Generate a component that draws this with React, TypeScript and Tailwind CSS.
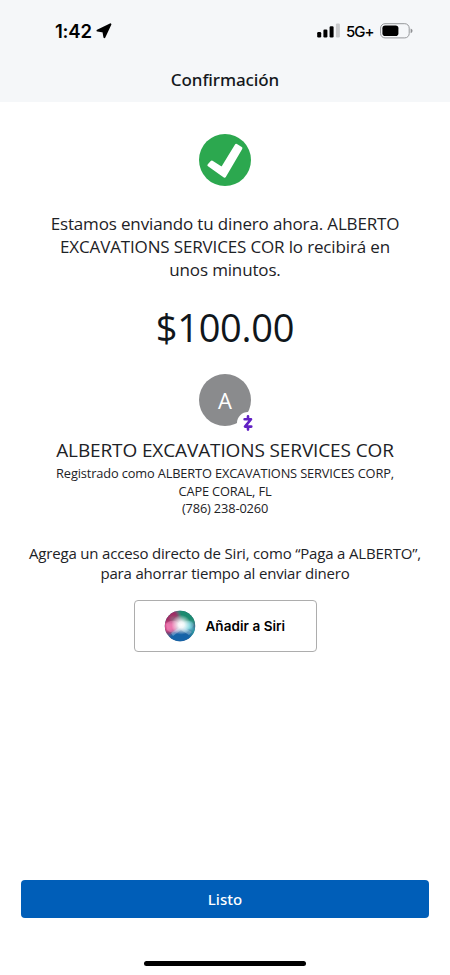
import type { ReactNode } from 'react';

const payment = {
  amount: '$100.00',
  initial: 'A',
  name: 'ALBERTO EXCAVATIONS SERVICES COR',
  phone: '(786) 238-0260',
};

function Line({ children }: { children: ReactNode }) {
  return <span className="block whitespace-nowrap">{children}</span>;
}

function StatusBar() {
  return (
    <div className="flex h-[61px] items-center justify-between pl-[55px] pr-[37px]">
      <div className="flex items-center gap-[4px]">
        <span className="pt-[1px] font-['Inter'] text-[18.5px] leading-none font-semibold tracking-[-0.2px] text-black">
          1:42
        </span>
        <svg width="16" height="16" viewBox="0 0 16 16">
          <path
            d="M14.4 1.4 8.4 14.2 7.4 8.5 1.5 7.6Z"
            fill="#000"
            stroke="#000"
            strokeWidth="2"
            strokeLinejoin="round"
          />
        </svg>
      </div>

      <div className="flex items-center">
        <svg width="24" height="15" viewBox="0 0 24 15">
          <rect x="0.2" y="9" width="4" height="5.4" rx="1.2" fill="#000" />
          <rect x="6.4" y="6.6" width="4" height="7.8" rx="1.2" fill="#000" />
          <rect x="12.6" y="3.2" width="4" height="11.2" rx="1.2" fill="#000" />
          <rect x="18.9" y="0.4" width="4" height="14" rx="1.2" fill="#c9cacc" />
        </svg>
        <span className="ml-[5px] w-[28px] pt-[2px] font-['Inter'] text-[15px] leading-none font-medium tracking-[-1px] text-black">
          5G+
        </span>
        <svg className="ml-[6px]" width="33" height="16" viewBox="0 0 33 16">
          <rect x="0.6" y="0.7" width="28.6" height="14.2" rx="4.4" fill="none" stroke="#96989b" strokeWidth="1" />
          <rect x="2.4" y="2.5" width="16" height="10.6" rx="2.8" fill="#000" />
          <path d="M30.6 5.4c1.3.4 1.9 1.3 1.9 2.4s-.6 2-1.9 2.4Z" fill="#8f9194" />
        </svg>
      </div>
    </div>
  );
}

function SiriOrb() {
  return (
    <svg width="32" height="32" viewBox="0 0 32 32">
      <defs>
        <radialGradient id="orbGlow" cx="0.54" cy="0.46" r="0.33">
          <stop offset="0" stopColor="#fff" />
          <stop offset="0.3" stopColor="#fff" stopOpacity="0.9" />
          <stop offset="1" stopColor="#fff" stopOpacity="0" />
        </radialGradient>
        <filter id="orbBlur" x="-30%" y="-30%" width="160%" height="160%">
          <feGaussianBlur stdDeviation="1.6" />
        </filter>
        <clipPath id="orbClip">
          <circle cx="16" cy="16" r="15.2" />
        </clipPath>
      </defs>
      <g clipPath="url(#orbClip)">
        <rect width="32" height="32" fill="#3e5f82" />
        <g filter="url(#orbBlur)">
          <path d="M12-4H36V14L18 13Z" fill="#1e8a70" />
          <path d="M-4 6 8-3 14 4 16 14 6 24-4 22Z" fill="#a02c64" />
          <path d="M6 7 15 7 16 14 8 13Z" fill="#93627f" />
          <path d="M0 13 12 12 13 21 2 21Z" fill="#e8609f" />
          <path d="M18 13 28 12 29 20 20 21Z" fill="#6fcbe0" />
          <path d="M36 15 28 19 26 32 36 28Z" fill="#2397a4" />
          <path d="M3 36 6 24 16 20 27 24 28 36Z" fill="#1463a8" />
        </g>
        <path d="M2 14C6 9 14 10 17 16 14 23 7 24 3 20Z" fill="#f4a4cd" opacity="0.35" />
        <path d="M17 15C21 9 28 10 30 15 28 20 22 20 17 16Z" fill="#8ce8d8" opacity="0.25" />
        <path d="M17 16 28 22 25 25 17 20 9 26 7 23Z" fill="#a5d7f5" opacity="0.4" />
        <circle cx="16" cy="16" r="15" fill="url(#orbGlow)" />
      </g>
    </svg>
  );
}

function Avatar() {
  return (
    <div className="relative mt-[23px] flex h-[52px] w-[52px] items-center justify-center rounded-full bg-[#8a8b8d]">
      <span className="text-[22px] leading-none text-white">{payment.initial}</span>
      {/* Zelle badge */}
      <div className="absolute top-[38px] left-[38px] flex h-[22px] w-[22px] items-center justify-center rounded-full bg-white">
        <svg width="10" height="16" viewBox="0 0 10 16">
          <path
            d="M1.6 4.2H8L2 11.6H8.3M5 1.3V4.2M5 11.6V14.6"
            fill="none"
            stroke="#6121c4"
            strokeWidth="2.6"
            strokeLinecap="round"
            strokeLinejoin="round"
          />
        </svg>
      </div>
    </div>
  );
}

export default function App() {
  return (
    <div className="flex h-[975px] w-[450px] flex-col bg-white font-['Open_Sans',sans-serif] text-[#1d2226]">
      <header className="h-[102px] bg-[#f5f7f9]">
        <StatusBar />
        <h1 className="pt-[7px] text-center font-['Noto_Sans',sans-serif] text-[17px] leading-[24px] font-medium tracking-[-0.1px] text-[#14181c]">
          Confirmación
        </h1>
      </header>

      <main className="flex flex-1 flex-col items-center text-center">
        <svg className="mt-[32px]" width="52" height="52" viewBox="0 0 52 52">
          <circle cx="26" cy="26" r="26" fill="#2ca84f" />
          <path
            d="M9.8 31.2 12.8 28 23 34.4 37.2 11.2 42 14.2 25.6 42.4Z"
            fill="#fff"
            stroke="#fff"
            strokeWidth="2.8"
            strokeLinejoin="round"
          />
        </svg>

        <p className="mt-[26px] text-[17px] leading-[23px] tracking-[-0.15px]">
          <Line>Estamos enviando tu dinero ahora. ALBERTO</Line>
          <Line>EXCAVATIONS SERVICES COR lo recibirá en</Line>
          <Line>unos minutos.</Line>
        </p>

        <p className="mt-[22px] text-[38px] leading-[48px] tracking-[-0.25px] text-[#10161b]">{payment.amount}</p>

        <Avatar />

        <h2 className="mt-[11px] text-[19px] leading-[26px] tracking-[-0.12px] whitespace-nowrap">{payment.name}</h2>
        <p className="mt-[2px] text-[12.8px] leading-[17.5px] tracking-[-0.14px]">
          <Line>Registrado como ALBERTO EXCAVATIONS SERVICES CORP,</Line>
          <Line>CAPE CORAL, FL</Line>
          <Line>{payment.phone}</Line>
        </p>

        <p className="mt-[25.5px] text-[15px] leading-[20px] tracking-[-0.18px]">
          <Line>Agrega un acceso directo de Siri, como “Paga a ALBERTO”,</Line>
          <Line>para ahorrar tiempo al enviar dinero</Line>
        </p>

        <button className="mt-[17px] flex h-[52px] w-[183px] items-center rounded-[4px] border border-[#adadad] bg-white pl-[29px]">
          <SiriOrb />
          <span className="ml-[10px] font-['Inter'] text-[13.5px] font-semibold tracking-[0.05px] whitespace-nowrap text-black">
            Añadir a Siri
          </span>
        </button>
      </main>

      <footer className="flex flex-col items-center px-[21px] pb-[9px]">
        <button className="h-[38px] w-full rounded-[4px] bg-[#005eb8] font-['Noto_Sans',sans-serif] text-[15px] font-medium text-white">
          Listo
        </button>
        <div className="mt-[43px] h-[5px] w-[162px] rounded-full bg-black" />
      </footer>
    </div>
  );
}
